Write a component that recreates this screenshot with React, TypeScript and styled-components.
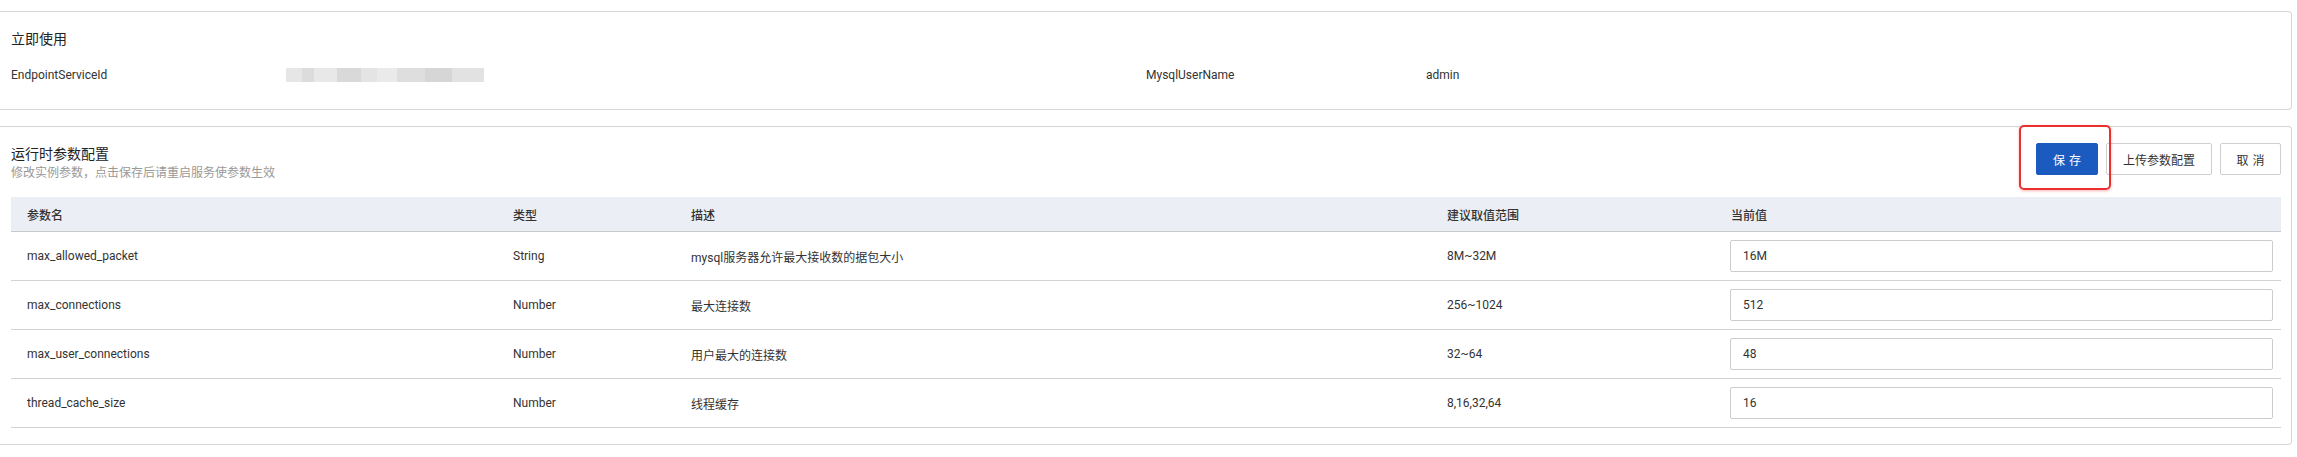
import React from "react";
import styled, { createGlobalStyle } from "styled-components";

const GlobalStyle = createGlobalStyle`
  html, body { margin: 0; padding: 0; background: #ffffff; }
  body {
    font-family: Roboto, "Noto Sans CJK SC", "Noto Sans", sans-serif;
    font-size: 12px;
    color: #333333;
    -webkit-font-smoothing: antialiased;
  }
  * { box-sizing: border-box; }
`;

const Page = styled.div`
  padding-top: 11px;
  display: flex;
  flex-direction: column;
  gap: 16px;
  width: 2297px;
`;

const Card = styled.section<{ $pt: number; $pb: number }>`
  width: 2292px;
  border: 1px solid #d6d6d9;
  border-left: none;
  border-radius: 0 4px 4px 0;
  background: #fff;
  padding: ${(p) => `${p.$pt}px 10px ${p.$pb}px 11px`};
`;

const CardTitle = styled.h3`
  margin: 0;
  font-size: 14px;
  line-height: 20px;
  font-weight: 400;
  color: #222;
`;

const DescRow = styled.div`
  margin-top: 16px;
  display: grid;
  grid-template-columns: 1135px 1fr;
  height: 20px;
  line-height: 20px;
`;

const DescItem = styled.div`
  display: flex;
  align-items: center;
`;

const DescLabel = styled.div<{ $w: number }>`
  width: ${(p) => p.$w}px;
  flex: none;
  color: #333;
  font-size: 12px;
`;

const DescValue = styled.div`
  flex: 1;
  color: #333;
  font-size: 12px;
`;

const Blurred = styled.div`
  width: 198px;
  height: 14px;
  background: linear-gradient(
    90deg,
    #e6e6e6 0 8%,
    #dcdcdc 8% 14%,
    #e8e8e8 14% 26%,
    #d9d9d9 26% 38%,
    #e4e4e4 38% 46%,
    #eaeaea 46% 56%,
    #dedede 56% 70%,
    #d6d6d6 70% 84%,
    #e2e2e2 84% 100%
  );
  filter: blur(0.6px);
`;

const HeadRow = styled.div`
  display: flex;
  justify-content: space-between;
  align-items: flex-start;
`;

const TitleBlock = styled.div`
  padding-top: 1px;
`;

const SubTitle = styled.div`
  font-size: 12px;
  line-height: 18px;
  color: #999;
`;

const Actions = styled.div`
  display: flex;
  gap: 8px;
`;

const Highlight = styled.div`
  position: relative;
  display: flex;
  &::after {
    content: "";
    position: absolute;
    left: -17px;
    right: -13px;
    top: -18px;
    bottom: -15px;
    border: 2px solid #ec2f2f;
    border-radius: 5px;
    box-shadow: 0 1px 3px rgba(236, 47, 47, 0.35);
    pointer-events: none;
  }
`;

const Button = styled.button<{ $primary?: boolean; $spaced?: boolean; $w: number }>`
  height: 32px;
  width: ${(p) => p.$w}px;
  padding: 0;
  border-radius: 2px;
  font-family: inherit;
  font-size: 12px;
  cursor: pointer;
  border: 1px solid ${(p) => (p.$primary ? "#1b5bbf" : "#cfcfcf")};
  background: ${(p) => (p.$primary ? "#1b5bbf" : "#fff")};
  color: ${(p) => (p.$primary ? "#fff" : "#333")};
  letter-spacing: ${(p) => (p.$spaced ? "0.34em" : "0")};
  text-indent: ${(p) => (p.$spaced ? "0.34em" : "0")};
`;

const Table = styled.div`
  margin-top: 15px;
  width: 2270px;
`;

const COLS = "486px 178px 756px 284px 1fr";

const HeaderRow = styled.div`
  display: grid;
  grid-template-columns: ${COLS};
  height: 35px;
  background: #ebeef5;
  border-bottom: 1px solid #c9c9cc;
  align-items: center;
`;

const HeaderCell = styled.div`
  padding-left: 16px;
  font-size: 12px;
  color: #333;
  font-weight: 500;
`;

const BodyRow = styled.div`
  display: grid;
  grid-template-columns: ${COLS};
  height: 49px;
  border-bottom: 1px solid #d3d3d6;
  align-items: center;
`;

const Cell = styled.div`
  padding-left: 16px;
  font-size: 12px;
  color: #333;
`;

const InputCell = styled.div`
  padding: 0 8px 0 15px;
`;

const Input = styled.input`
  width: 100%;
  height: 32px;
  border: 1px solid #cccccc;
  border-radius: 2px;
  padding: 0 12px;
  font-family: inherit;
  font-size: 12px;
  color: #333;
  outline: none;
  background: #fff;
`;

const rows = [
  { name: "max_allowed_packet", type: "String", desc: "mysql服务器允许最大接收数的据包大小", range: "8M~32M", value: "16M" },
  { name: "max_connections", type: "Number", desc: "最大连接数", range: "256~1024", value: "512" },
  { name: "max_user_connections", type: "Number", desc: "用户最大的连接数", range: "32~64", value: "48" },
  { name: "thread_cache_size", type: "Number", desc: "线程缓存", range: "8,16,32,64", value: "16" },
];

export default function App() {
  return (
    <>
      <GlobalStyle />
      <Page>
        <Card $pt={17} $pb={24}>
          <CardTitle>立即使用</CardTitle>
          <DescRow>
            <DescItem>
              <DescLabel $w={275}>EndpointServiceId</DescLabel>
              <DescValue>
                <Blurred />
              </DescValue>
            </DescItem>
            <DescItem>
              <DescLabel $w={280}>MysqlUserName</DescLabel>
              <DescValue>admin</DescValue>
            </DescItem>
          </DescRow>
        </Card>
        <Card $pt={16} $pb={16}>
          <HeadRow>
            <TitleBlock>
              <CardTitle>运行时参数配置</CardTitle>
              <SubTitle>修改实例参数，点击保存后请重启服务使参数生效</SubTitle>
            </TitleBlock>
            <Actions>
              <Highlight>
                <Button $primary $spaced $w={62}>保存</Button>
              </Highlight>
              <Button $w={106}>上传参数配置</Button>
              <Button $spaced $w={61}>取消</Button>
            </Actions>
          </HeadRow>
          <Table>
            <HeaderRow>
              <HeaderCell>参数名</HeaderCell>
              <HeaderCell>类型</HeaderCell>
              <HeaderCell>描述</HeaderCell>
              <HeaderCell>建议取值范围</HeaderCell>
              <HeaderCell>当前值</HeaderCell>
            </HeaderRow>
            {rows.map((r) => (
              <BodyRow key={r.name}>
                <Cell>{r.name}</Cell>
                <Cell>{r.type}</Cell>
                <Cell>{r.desc}</Cell>
                <Cell>{r.range}</Cell>
                <InputCell>
                  <Input defaultValue={r.value} />
                </InputCell>
              </BodyRow>
            ))}
          </Table>
        </Card>
      </Page>
    </>
  );
}
